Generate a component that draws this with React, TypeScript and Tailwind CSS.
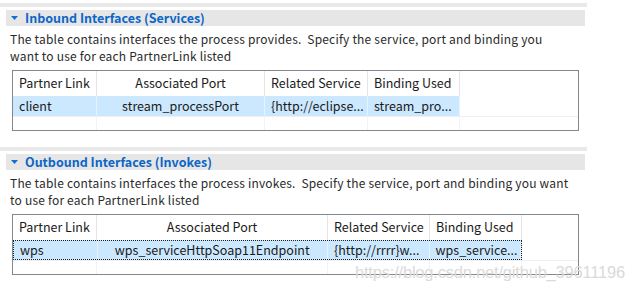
import type React from 'react';

interface Col {
  width: number;
  head: string;
  cell: string;
  center?: boolean;
}

interface SectionProps {
  title: string;
  lines: string[];
  cols: Col[];
  focused?: boolean;
}

const Section: React.FC<SectionProps> = ({ title, lines, cols, focused }) => (
  <div className="flex flex-col">
    <div className="h-[4px] w-[587px] bg-[#e9e9e9]" />
    <div className="ml-[6px] mt-[3px] flex h-[16px] w-[579px] items-center bg-[#e6e6e6]">
      <svg aria-hidden="true" className="ml-[5px] h-[4px] w-[7px]" viewBox="0 0 7 4">
        <path d="M0 0h7L3.5 4z" fill="#1470d0" />
      </svg>
      <span className="ml-[7px] text-[12.5px] font-bold leading-none text-[#0c66c8]">{title}</span>
    </div>
    <div className="mt-[4px] flex flex-col pl-[10px] text-[12px] tracking-[0.2px] text-[#2a2a2a]">
      {lines.map((l) => (
        <div key={l} className="h-[17px] whitespace-pre leading-[17px]">
          {l}
        </div>
      ))}
    </div>
    <div className="ml-[12px] mt-[6px] flex h-[61px] w-[567px] flex-col border border-[#828790] bg-white text-[12.5px] text-[#1a1a1a]">
      <div className="flex h-[25px] items-center">
        {cols.map((c) => (
          <div
            key={c.head}
            style={{ width: c.width }}
            className={`flex h-full items-center whitespace-nowrap border-r border-[#e5e5e5] px-[6px] ${c.center ? 'justify-center' : ''}`}
          >
            {c.head}
          </div>
        ))}
      </div>
      <div className="flex h-[20px]">
        <div
          className={`flex h-full bg-[#cce8ff] ${focused ? 'border border-dotted border-[#222]' : ''}`}
        >
          {cols.map((c) => (
            <div
              key={c.head}
              style={{ width: focused ? c.width - 0.5 : c.width }}
              className={`flex h-full items-center overflow-hidden whitespace-nowrap border-r border-[#e8f2fb] px-[6px] ${c.center ? 'justify-center' : ''}`}
            >
              {c.cell}
            </div>
          ))}
        </div>
      </div>
      <div className="flex flex-1 border-t border-[#f0f0f0]">
        {cols.map((c) => (
          <div key={c.head} style={{ width: c.width }} className="h-full border-r border-[#eef4fb]" />
        ))}
      </div>
    </div>
  </div>
);

export default function App() {
  return (
    <div
      className="relative h-[292px] w-[633px] overflow-hidden bg-white pt-[3px]"
      style={{ fontFamily: '"Noto Sans CJK SC", "Noto Sans", sans-serif' }}
    >
      <Section
        title="Inbound Interfaces (Services)"
        lines={[
          'The table contains interfaces the process provides.  Specify the service, port and binding you',
          'want to use for each PartnerLink listed',
        ]}
        cols={[
          { width: 84, head: 'Partner Link', cell: 'client' },
          { width: 168, head: 'Associated Port', cell: 'stream_processPort', center: true },
          { width: 103, head: 'Related Service', cell: '{http://eclipse...' },
          { width: 92, head: 'Binding Used', cell: 'stream_pro...' },
        ]}
      />
      <div className="mt-[16px]">
        <Section
          title="Outbound Interfaces (Invokes)"
          lines={[
            'The table contains interfaces the process invokes.  Specify the service, port and binding you want',
            'to use for each PartnerLink listed',
          ]}
          focused
          cols={[
            { width: 84, head: 'Partner Link', cell: 'wps' },
            { width: 231, head: 'Associated Port', cell: 'wps_serviceHttpSoap11Endpoint', center: true },
            { width: 102, head: 'Related Service', cell: '{http://rrrr}w...' },
            { width: 92, head: 'Binding Used', cell: 'wps_service...' },
          ]}
        />
      </div>
      <div
        className="absolute left-[355px] top-[260px] text-[16.5px] tracking-[-0.2px] text-[#dadada]"
        style={{ fontFamily: '"Liberation Sans", Arial, sans-serif' }}
      >
        https://blog.csdn.net/github_39611196
      </div>
    </div>
  );
}
